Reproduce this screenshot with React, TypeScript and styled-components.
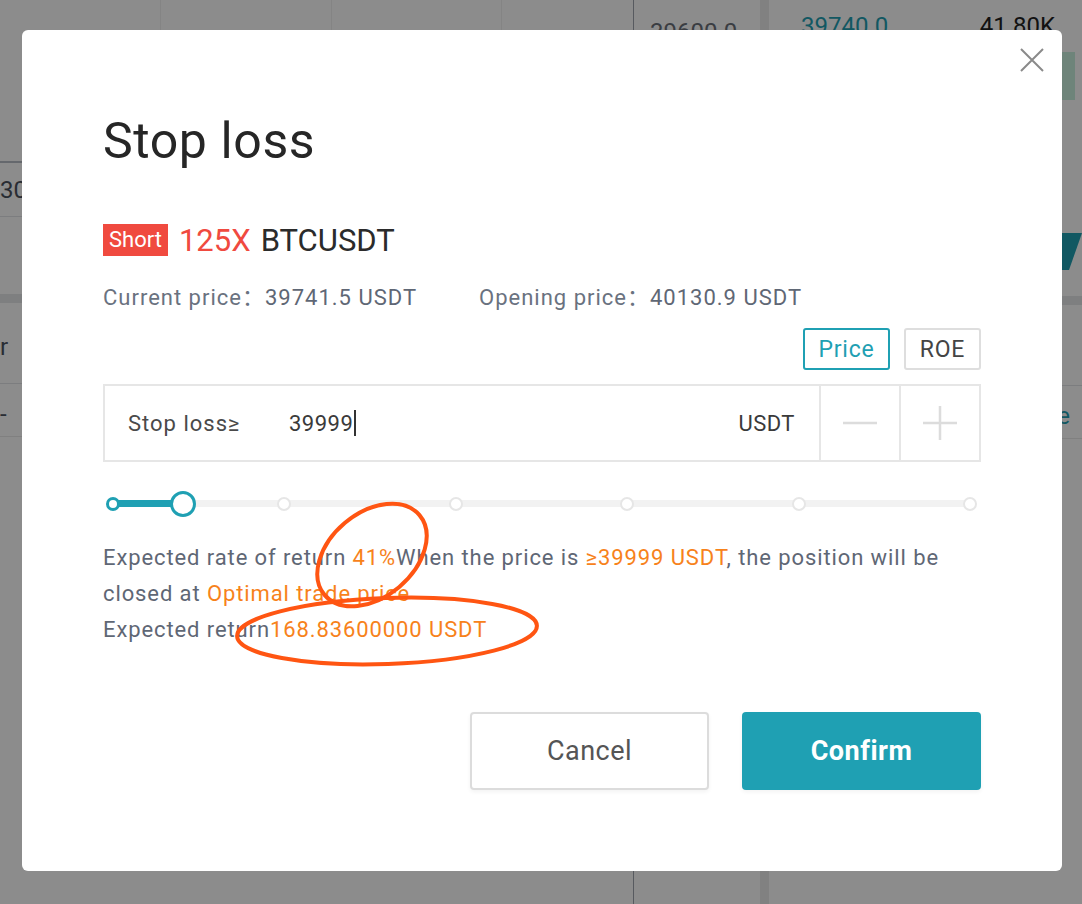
import React from "react";
import styled, { createGlobalStyle } from "styled-components";

const Global = createGlobalStyle`
  html, body { margin: 0; padding: 0; }
  body {
    width: 1082px; height: 904px; overflow: hidden; background: #fff;
    font-family: Roboto, "Noto Sans", "Noto Sans CJK SC", sans-serif;
  }
  * { box-sizing: border-box; }
`;

/* ---------- background trading page ---------- */
const Page = styled.div`
  display: flex;
  width: 1082px;
  height: 904px;
`;
const LeftPane = styled.div`
  width: 634px;
  border-right: 1px solid #9fa4ad;
  display: flex;
  flex-direction: column;
`;
const TopTable = styled.div`
  display: grid;
  grid-template-columns: 161px 171px 170px 1fr;
  height: 163px;
  border-bottom: 2px solid #b9bec7;
`;
const Cell = styled.div`
  border-right: 1px solid #f1f1f1;
  &:last-child { border-right: none; }
`;
const Band = styled.div<{ $h: number; $line?: string; $pt?: number }>`
  height: ${(p) => p.$h}px;
  border-bottom: 1px solid ${(p) => p.$line || "transparent"};
  padding-top: ${(p) => p.$pt || 0}px;
  display: flex;
  align-items: center;
  overflow: hidden;
  font-size: 24px;
  color: #4c5260;
`;
const Divider = styled.div`
  height: 9px;
  background: #e6e7e9;
`;
const MidPane = styled.div`
  width: 126px;
  padding: 18px 0 0 16px;
  font-size: 24px;
  color: #6a6f78;
`;
const Gutter = styled.div`
  width: 9px;
  background: #ebebeb;
`;
const RightPane = styled.div`
  flex: 1;
  display: flex;
  flex-direction: column;
`;
const BookRow = styled.div`
  height: 52px;
  display: flex;
  align-items: center;
  justify-content: space-between;
  padding: 0 27px 0 32px;
  font-size: 24px;
`;
const BookPrice = styled.span`
  color: #1fa0b3;
`;
const BookQty = styled.span`
  color: #222;
`;
const DepthRow = styled.div`
  height: 48px;
  display: flex;
  justify-content: flex-end;
  padding-right: 7px;
`;
const DepthBar = styled.div`
  width: 14px;
  background: #c8f0df;
`;
const SellTab = styled.div`
  height: 37px;
  margin: 133px 0 26px;
  display: flex;
  justify-content: flex-end;
`;
const SellShape = styled.div`
  width: 20px;
  background: #1fa0b3;
  clip-path: polygon(0 0, 100% 0, 35% 100%, 0 100%);
`;
const LinkText = styled.span`
  color: #1fa0b3;
  margin-left: auto;
  margin-right: 12px;
`;

/* ---------- modal ---------- */
const Backdrop = styled.div`
  position: fixed;
  inset: 0;
  background: rgba(0, 0, 0, 0.45);
  padding: 30px 0 0 22px;
`;
const Modal = styled.div`
  position: relative;
  width: 1040px;
  height: 841px;
  background: #fff;
  border-radius: 6px;
  padding: 83px 81px 0;
  display: flex;
  flex-direction: column;
`;
const CloseButton = styled.button`
  position: absolute;
  top: 18px;
  right: 18px;
  width: 24px;
  height: 24px;
  padding: 0;
  border: none;
  background: none;
  display: flex;
`;
const Title = styled.h1`
  margin: 0;
  font-size: 50px;
  line-height: 56px;
  font-weight: 400;
  letter-spacing: 0.6px;
  color: #262626;
`;
const TagRow = styled.div`
  margin-top: 55px;
  height: 32px;
  display: flex;
  align-items: center;
  gap: 10px;
`;
const SideTag = styled.span`
  height: 32px;
  line-height: 32px;
  padding: 0 6px;
  background: #f04a3f;
  color: #fff;
  font-size: 22px;
  margin-right: 1px;
`;
const Leverage = styled.span`
  font-size: 31px;
  color: #f04a3f;
`;
const Symbol = styled.span`
  font-size: 31px;
  color: #2b2b2b;
`;
const PriceRow = styled.div`
  margin-top: 27px;
  display: flex;
  gap: 62px;
  font-size: 22px;
  line-height: 30px;
  letter-spacing: 1px;
  color: #6a7280;
`;
const PriceValue = styled.span`
  color: #5f6775;
`;
const ModeRow = styled.div`
  margin-top: 15px;
  display: flex;
  justify-content: flex-end;
  gap: 14px;
`;
const ModeButton = styled.button<{ $active?: boolean; $w: number }>`
  width: ${(p) => p.$w}px;
  height: 42px;
  padding: 0;
  border: 2px solid ${(p) => (p.$active ? "#1fa0b3" : "#dedede")};
  border-radius: 3px;
  background: #fff;
  color: ${(p) => (p.$active ? "#1fa0b3" : "#444")};
  font-family: inherit;
  font-size: 23px;
  letter-spacing: 0.8px;
`;
const InputBox = styled.div`
  margin-top: 14px;
  height: 78px;
  border: 2px solid #e6e6e6;
  display: flex;
`;
const InputMain = styled.div`
  flex: 1;
  display: flex;
  align-items: center;
  padding: 0 24px 0 23px;
  font-size: 22px;
`;
const InputLabel = styled.span`
  width: 161px;
  color: #4a4a4a;
  letter-spacing: 1px;
`;
const InputValue = styled.span`
  flex: 1;
  display: flex;
  align-items: center;
  color: #3a3a3a;
  letter-spacing: 0.5px;
`;
const Caret = styled.span`
  width: 2px;
  height: 26px;
  margin-left: 1px;
  background: #333;
`;
const Unit = styled.span`
  color: #3a3a3a;
  letter-spacing: 0.5px;
`;
const StepButton = styled.button`
  width: 80px;
  border: none;
  border-left: 2px solid #e6e6e6;
  background: #fff;
  padding: 0;
  display: flex;
  align-items: center;
  justify-content: center;
`;
const Slider = styled.div`
  margin-top: 28px;
  height: 26px;
  position: relative;
`;
const Rail = styled.div`
  position: absolute;
  left: 10px;
  right: 11px;
  top: 10px;
  height: 7px;
  border-radius: 3px;
  background: #f2f2f2;
`;
const Fill = styled.div`
  position: absolute;
  left: 0;
  top: 0;
  height: 7px;
  background: #1fa0b3;
`;
const Mark = styled.span<{ $active?: boolean }>`
  position: absolute;
  top: -3.5px;
  width: 14px;
  height: 14px;
  margin-left: -7px;
  border-radius: 50%;
  background: #fff;
  border: ${(p) => (p.$active ? "3px solid #1fa0b3" : "2px solid #e6e6e6")};
`;
const Handle = styled.span`
  position: absolute;
  top: -9.5px;
  width: 26px;
  height: 26px;
  margin-left: -13px;
  border-radius: 50%;
  background: #fff;
  border: 3px solid #1fa0b3;
`;
const Info = styled.p`
  margin: 24px 0 0;
  font-size: 22px;
  line-height: 36px;
  letter-spacing: 0.9px;
  color: #5f6775;
`;
const Hl = styled.span`
  color: #f7821b;
`;
const Actions = styled.div`
  margin-top: 64px;
  display: flex;
  justify-content: flex-end;
  gap: 33px;
`;
const ActionButton = styled.button<{ $primary?: boolean }>`
  width: 239px;
  height: 78px;
  border-radius: 4px;
  font-family: inherit;
  font-size: 27px;
  letter-spacing: 0.5px;
  font-weight: ${(p) => (p.$primary ? 700 : 400)};
  color: ${(p) => (p.$primary ? "#fff" : "#555")};
  background: ${(p) => (p.$primary ? "#1fa0b3" : "#fff")};
  border: ${(p) => (p.$primary ? "none" : "2px solid #dcdcdc")};
  box-shadow: 0 2px 4px rgba(0, 0, 0, 0.05);
`;
const Annotations = styled.svg`
  position: absolute;
  left: 0;
  top: 0;
  width: 1040px;
  height: 841px;
  pointer-events: none;
`;

const marks = [0, 20, 40, 60, 80, 100];
const value = 8.2;

export default function App() {
  return (
    <>
      <Global />
      <Page>
        <LeftPane>
          <TopTable>
            <Cell />
            <Cell />
            <Cell />
            <Cell />
          </TopTable>
          <Band $h={54} $line="#e2e4e8">30</Band>
          <Band $h={77} />
          <Divider />
          <Band $h={81} $line="#e2e4e8" $pt={8}>r</Band>
          <Band $h={53} $line="#e9e9e9" $pt={8}>-</Band>
        </LeftPane>
        <MidPane>39600.0</MidPane>
        <Gutter />
        <RightPane>
          <BookRow>
            <BookPrice>39740.0</BookPrice>
            <BookQty>41.80K</BookQty>
          </BookRow>
          <DepthRow>
            <DepthBar />
          </DepthRow>
          <SellTab>
            <SellShape />
          </SellTab>
          <Divider />
          <Band $h={81} $line="#e2e4e8" />
          <Band $h={53} $line="#e9e9e9" $pt={8}>
            <LinkText>e</LinkText>
          </Band>
        </RightPane>
      </Page>

      <Backdrop>
        <Modal>
          <CloseButton aria-label="close">
            <svg width="24" height="24" viewBox="0 0 24 24">
              <path d="M1 1 L23 23 M23 1 L1 23" stroke="#8a8a8a" strokeWidth="2" fill="none" />
            </svg>
          </CloseButton>
          <Title>Stop loss</Title>
          <TagRow>
            <SideTag>Short</SideTag>
            <Leverage>125X</Leverage>
            <Symbol>BTCUSDT</Symbol>
          </TagRow>
          <PriceRow>
            <span>
              Current price：<PriceValue>39741.5 USDT</PriceValue>
            </span>
            <span>
              Opening price：<PriceValue>40130.9 USDT</PriceValue>
            </span>
          </PriceRow>
          <ModeRow>
            <ModeButton $active $w={87}>Price</ModeButton>
            <ModeButton $w={77}>ROE</ModeButton>
          </ModeRow>
          <InputBox>
            <InputMain>
              <InputLabel>Stop loss≥</InputLabel>
              <InputValue>
                39999
                <Caret />
              </InputValue>
              <Unit>USDT</Unit>
            </InputMain>
            <StepButton aria-label="decrease">
              <svg width="34" height="34" viewBox="0 0 34 34">
                <path d="M0 17 H34" stroke="#dcdcdc" strokeWidth="2.5" />
              </svg>
            </StepButton>
            <StepButton aria-label="increase">
              <svg width="34" height="34" viewBox="0 0 34 34">
                <path d="M0 17 H34 M17 0 V34" stroke="#dcdcdc" strokeWidth="2.5" />
              </svg>
            </StepButton>
          </InputBox>
          <Slider>
            <Rail>
              <Fill style={{ width: `${value}%` }} />
              {marks.map((m) => (
                <Mark key={m} $active={m <= value} style={{ left: `${m}%` }} />
              ))}
              <Handle style={{ left: `${value}%` }} />
            </Rail>
          </Slider>
          <Info>
            Expected rate of return <Hl>41%</Hl>When the price is <Hl>≥39999 USDT</Hl>, the position will be
            closed at <Hl>Optimal trade price</Hl>
            <br />
            Expected return<Hl>168.83600000 USDT</Hl>
          </Info>
          <Actions>
            <ActionButton>Cancel</ActionButton>
            <ActionButton $primary>Confirm</ActionButton>
          </Actions>
          <Annotations viewBox="0 0 1040 841">
            <ellipse cx="350" cy="525" rx="62" ry="42" transform="rotate(-40 350 525)" fill="none" stroke="#ff5512" strokeWidth="4" />
            <ellipse cx="365" cy="601" rx="150" ry="33" transform="rotate(-2 365 601)" fill="none" stroke="#ff5512" strokeWidth="4" />
          </Annotations>
        </Modal>
      </Backdrop>
    </>
  );
}
